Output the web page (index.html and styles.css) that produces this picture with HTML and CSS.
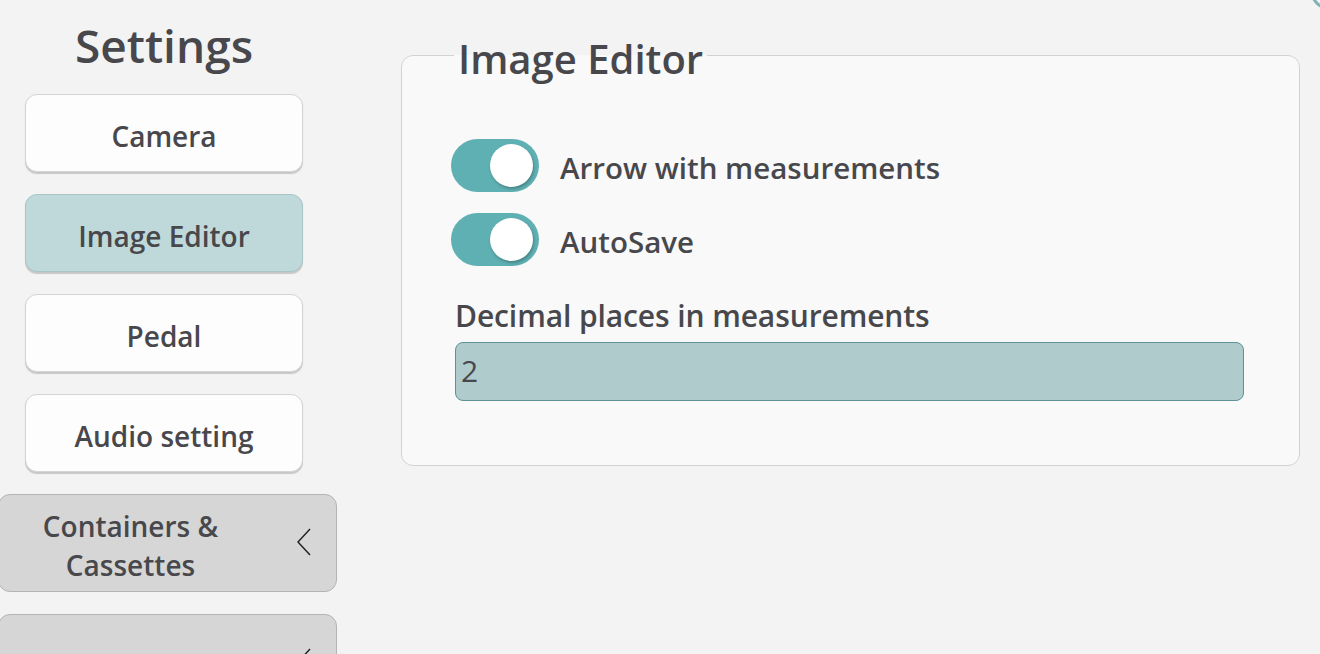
FILE: index.html
```html
<!DOCTYPE html>
<html>
<head>
<meta charset="utf-8">
<link rel="stylesheet" href="styles.css">
</head>
<body>
<div class="app">
  <aside class="sidebar">
    <h1 class="title">Settings</h1>
    <nav class="menu">
      <button class="item">Camera</button>
      <button class="item active">Image Editor</button>
      <button class="item">Pedal</button>
      <button class="item">Audio setting</button>
    </nav>
    <div class="groups">
      <button class="group"><span class="group-label">Containers &amp;<br>Cassettes</span><svg class="chev" width="16" height="28" viewBox="0 0 16 28"><path d="M14 1 L2 14 L14 27" fill="none" stroke="#1e1e1e" stroke-width="1.4"/></svg></button>
      <button class="group"><span class="group-label">&nbsp;</span><svg class="chev" width="16" height="28" viewBox="0 0 16 28"><path d="M14 1 L2 14 L14 27" fill="none" stroke="#1e1e1e" stroke-width="1.4"/></svg></button>
    </div>
  </aside>
  <main class="content">
    <fieldset class="panel">
      <legend class="legend">Image Editor</legend>
      <div class="toggles">
        <label class="row"><span class="switch"><span class="knob"></span></span><span class="row-label">Arrow with measurements</span></label>
        <label class="row"><span class="switch"><span class="knob"></span></span><span class="row-label">AutoSave</span></label>
      </div>
      <div class="field">
        <div class="field-label">Decimal places in measurements</div>
        <div class="input">2</div>
      </div>
    </fieldset>
  </main>
  <div class="corner"></div>
</div>
</body>
</html>
```
FILE: styles.css
```css
* { box-sizing: border-box; }
html, body { margin: 0; padding: 0; }
body {
  width: 1320px;
  height: 654px;
  overflow: hidden;
  background: #f3f3f3;
  font-family: "Open Sans", "Noto Sans", sans-serif;
  color: #48484c;
}
.app {
  position: relative;
  display: flex;
  height: 654px;
}
.sidebar {
  width: 340px;
  flex: none;
  display: flex;
  flex-direction: column;
  padding-top: 15px;
}
.title {
  margin: 0 0 19px 0;
  width: 328px;
  text-align: center;
  font-size: 46px;
  font-weight: 600;
  line-height: 60px;
}
.menu {
  display: flex;
  flex-direction: column;
  gap: 22px;
  padding-left: 25px;
}
.item {
  width: 278px;
  height: 78px;
  border-radius: 12px;
  background: #fdfdfd;
  border: 1px solid #d4d4d4;
  box-shadow: 0 1.5px 1px rgba(0,0,0,0.18);
  font-family: inherit;
  font-size: 28px;
  font-weight: 600;
  color: #48484c;
  padding: 5px 0 0 0;
}
.item.active {
  background: #bfd9da;
  border-color: #a8c6c7;
}
.groups {
  display: flex;
  flex-direction: column;
  gap: 22px;
  margin-top: 22px;
  margin-left: -2px;
}
.group {
  width: 339px;
  height: 98px;
  border-radius: 12px;
  background: #d6d6d6;
  border: 1px solid #b4b4b4;
  display: flex;
  align-items: center;
  padding: 0 24px 0 0;
  font-family: inherit;
  font-size: 28px;
  font-weight: 600;
  color: #48484c;
}
.group-label {
  flex: 1;
  text-align: center;
  line-height: 39px;
  padding-top: 6px;
  margin-right: 34px;
}
.chev { flex: none; margin-top: -2px; }
.content {
  flex: 1;
  padding-top: 26px;
  padding-left: 61px;
}
.panel {
  width: 899px;
  height: 440px;
  margin: 0;
  border: 1.5px solid #d2d2d2;
  border-radius: 12px;
  background: #f9f9f9;
  padding: 0 49px;
}
.legend {
  font-size: 40px;
  font-weight: 600;
  line-height: 50px;
  padding: 8px 4px 0 4px;
  margin-left: 3px;
}
.toggles {
  display: flex;
  flex-direction: column;
  gap: 21px;
  margin-top: 55px;
}
.row {
  display: flex;
  align-items: center;
  gap: 21px;
}
.switch {
  width: 88px;
  height: 53px;
  border-radius: 27px;
  background: #5fb0b3;
  position: relative;
  flex: none;
}
.knob {
  position: absolute;
  right: 6px;
  top: 5px;
  width: 43px;
  height: 43px;
  border-radius: 50%;
  background: #fff;
  box-shadow: 1px 2px 3px rgba(0,0,0,0.25);
}
.row-label {
  font-size: 29.5px;
  font-weight: 600;
  padding-top: 4px;
}
.field {
  margin-top: 28px;
}
.field-label {
  font-size: 30px;
  font-weight: 600;
  line-height: 40px;
  letter-spacing: -0.1px;
  margin-left: 4px;
  padding-top: 2px;
}
.input {
  margin-top: 6px;
  width: 789px;
  height: 59px;
  margin-left: 4px;
  background: #b0cbcc;
  border: 1.5px solid #5f9294;
  border-radius: 8px;
  font-size: 30px;
  font-weight: 500;
  line-height: 55px;
  padding-left: 5px;
}
.corner {
  position: absolute;
  right: -30px;
  top: -30px;
  width: 40px;
  height: 40px;
  border-radius: 50%;
  border: 3px solid #7fb3b5;
}
```
